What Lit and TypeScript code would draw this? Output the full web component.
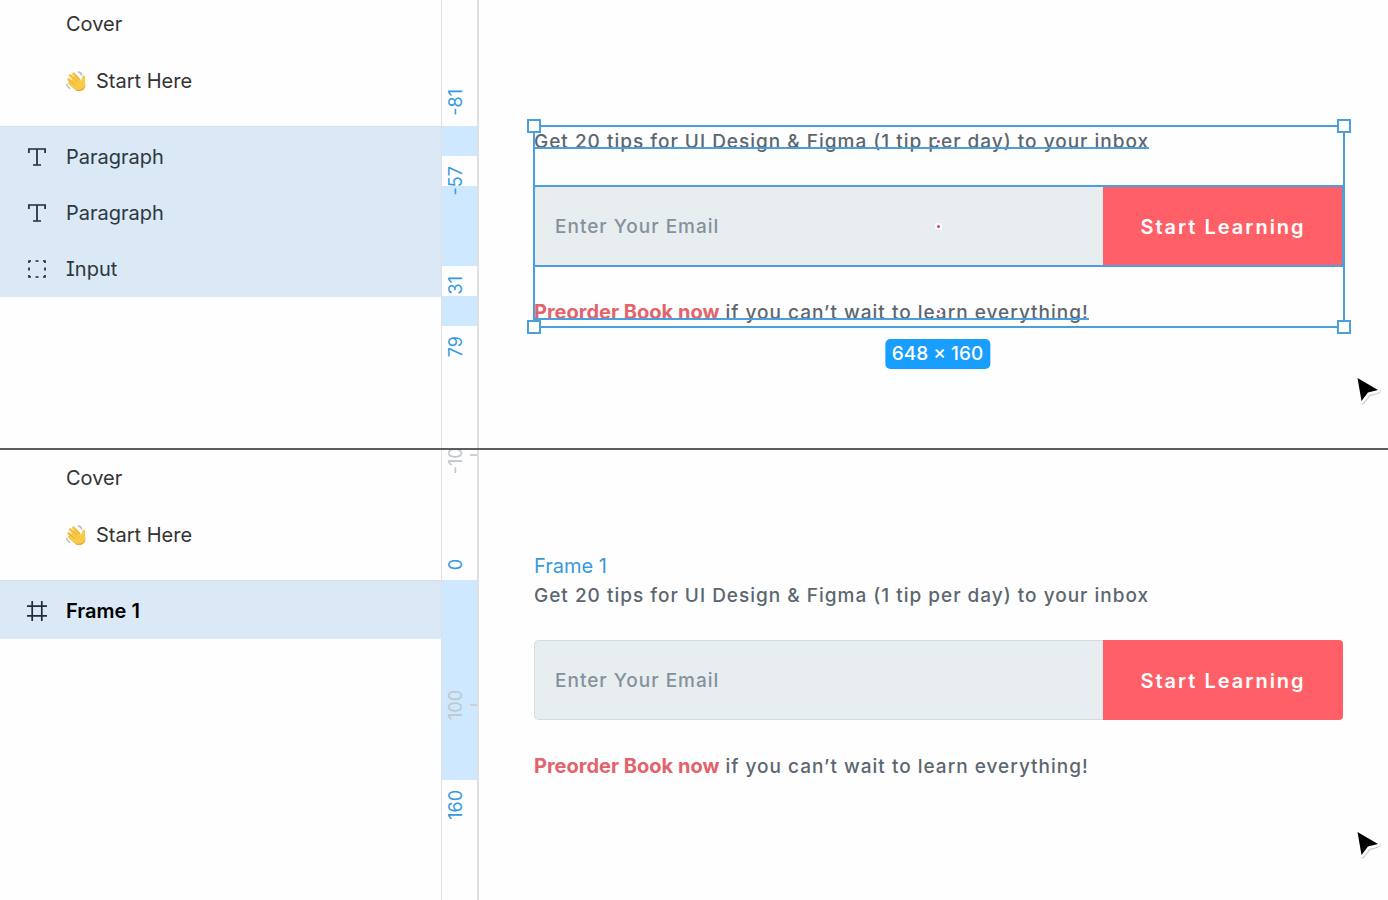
import { LitElement, html, svg, css, nothing } from "lit";
import { customElement, property } from "lit/decorators.js";
import { styleMap } from "lit/directives/style-map.js";

const SCALE = 1.25;

type IconName = "text" | "group" | "frame";
interface Layer { icon: IconName; name: string; strong?: boolean }
interface Band { from: number; to: number }
interface Mark { at: number; place: "before" | "after" | "center"; muted?: boolean }

const icons = {
  text: svg`<path d="M1.9 6V2H18.1V6M10 2V18M6 18H14" />`,
  group: svg`<path d="M2 4V2H4M8.5 2H11.5M16 2H18V4M18 8.5V11.5M18 16V18H16M11.5 18H8.5M4 18H2V16M2 11.5V8.5" />`,
  frame: svg`<path d="M5.2 0V20M14.8 0V20M0 5.2H20M0 14.8H20" />`,
};

@customElement("layer-list")
export class LayerList extends LitElement {
  @property({ attribute: false }) layers: Layer[] = [];

  static styles = css`
    :host { display: block; font-feature-settings: "cv08"; }
    .pages, .layers { display: grid; list-style: none; margin: 0; padding: 0; }
    .pages { gap: 1px; }
    .page, .layer { display: flex; align-items: center; height: 56px; color: #333; font-size: 20px; line-height: 24px; }
    .page { padding-left: 66px; gap: 9px; }
    .layers { margin-top: 17px; padding-top: 2px; border-top: 1px solid #d5e0e9; background: #dae9f5; }
    .layer { padding-left: 27px; gap: 19px; color: #2c3840; }
    .strong { font-weight: 600; color: #000; }
    .icon { width: 20px; height: 20px; fill: none; stroke: #222c34; stroke-width: 1.7; }
    .wave { width: 21px; height: 21px; }
  `;

  render() {
    return html`
      <ul class="pages">
        <li class="page">Cover</li>
        <li class="page">
          <svg class="wave" viewBox="0 0 21 21" aria-hidden="true">
            <g fill="none" stroke-linecap="round">
              <path d="M12.5 1.2Q15 1.5 15.6 4M0.8 13.5Q1 16.3 3.6 17.2" stroke="#bcc0c8" stroke-width="1.7" />
              <path d="M4.2 4.4L10.5 11M7.5 2.8L13 9M2.6 8.4L9 14M3.4 12L8.4 16.4" stroke="#f6c445" stroke-width="2.8" />
            </g>
            <path d="M6.4 6.4L11.4 4.8L15.2 9.8Q16 7.2 16.6 5.6Q17.6 3.9 19 5Q19.4 6 19 8Q19.2 11 19.4 14Q19.2 18.4 15 19.8Q11.5 20.8 8.8 18.4L4.4 13.2Z" fill="#f8ca4a" />
            <path d="M6 5.4L11 10.5M9.4 4.2L13.4 9M4 9.6L9 14" fill="none" stroke="#dc9d28" stroke-width="0.7" />
            <path d="M8.8 18.4Q11.5 20.8 15 19.8Q19.2 18.4 19.4 14Q17.4 18.4 13.4 18.8Q10.8 19 8.8 18.4Z" fill="#e5a52f" />
          </svg>
          <span>Start Here</span>
        </li>
      </ul>
      <ul class="layers">
        ${this.layers.map((l) => html`
          <li class="layer ${l.strong ? "strong" : ""}">
            <svg class="icon" viewBox="0 0 20 20" aria-hidden="true">${icons[l.icon]}</svg>
            <span>${l.name}</span>
          </li>`)}
      </ul>`;
  }
}

@customElement("side-ruler")
export class SideRuler extends LitElement {
  /** Distance in pixels from the top of the ruler to its zero. */
  @property({ type: Number }) origin = 0;
  @property({ attribute: false }) bands: Band[] = [];
  @property({ attribute: false }) marks: Mark[] = [];

  static styles = css`
    :host { display: block; position: relative; overflow: hidden; box-sizing: border-box; border: solid #e0e0e2; border-width: 0 2px 0 1px; }
    .band { position: absolute; left: 0; right: 0; background: #cde8ff; }
    .mark { position: absolute; left: 0; right: 0; height: 0; display: flex; }
    .after { align-items: flex-start; }
    .before { align-items: flex-end; }
    .center { align-items: center; }
    .label { flex: none; margin: 10px 4px; writing-mode: vertical-rl; transform: rotate(180deg); font-size: 18px; line-height: 20px; color: #3799e0; }
    .muted .label { color: #bfc6cc; }
    .muted::after { content: ""; width: 7px; height: 2px; margin-left: auto; background: #cbd0d4; }
  `;

  private y(v: number) { return Math.round(this.origin + v * SCALE); }

  render() {
    return html`
      ${this.bands.map((b) => html`<div class="band" style=${styleMap({ top: `${this.y(b.from)}px`, height: `${this.y(b.to) - this.y(b.from)}px` })}></div>`)}
      ${this.marks.map((m) => html`
        <div class="mark ${m.place} ${m.muted ? "muted" : ""}" style=${styleMap({ top: `${this.y(m.at)}px` })}>
          <span class="label">${m.at}</span>
        </div>`)}`;
  }
}

@customElement("signup-card")
export class SignupCard extends LitElement {
  @property({ type: Boolean }) selected = false;

  static styles = css`
    :host { display: block; position: relative; font-size: 19px; font-weight: 500; line-height: 32px; letter-spacing: 1px; color: #5b6770; }
    .stack { display: grid; gap: 30px; }
    .line, .form { position: relative; margin: 0; }
    .line { height: 30px; }
    .text { position: relative; }
    .lead { color: #e2636c; font-size: 20px; font-weight: 700; letter-spacing: 0; text-decoration: none; }
    .form { display: flex; height: 80px; }
    .field { flex: 1; min-width: 0; box-sizing: border-box; margin: 0; padding: 2px 20px 0; border: 1px solid #d3dce2; border-right: 0; border-radius: 5px 0 0 5px; background: #e8edf0; font: inherit; letter-spacing: 1px; color: #5b6770; outline: none; }
    .field::placeholder { color: #84919c; opacity: 1; }
    .submit { width: 240px; margin: 0; padding: 2px 0 0; border: 0; border-radius: 0 4px 4px 0; background: #ff6067; color: #fff; font: inherit; font-size: 20px; font-weight: 600; letter-spacing: 2px; }
    .selected .text::after { content: ""; position: absolute; left: 0; right: 0; bottom: 4px; height: 2px; background: #4a9fdc; }
    .selected .form { outline: 2px solid #4a9fdc; outline-offset: -1px; }
    .selected .line::after, .selected .form::after { content: ""; position: absolute; left: 50%; top: 50%; width: 3px; height: 3px; margin: -3px 0 0 -4px; border: 2px solid #fff; border-radius: 50%; background: #c2417c; }
    .bounds { position: absolute; inset: -1px -2px -2px -1px; border: 2px solid #4a9fdc; pointer-events: none; }
    .handle { position: absolute; width: 10px; height: 10px; border: 2px solid #4a9fdc; background: #fff; }
    .tl { left: -8px; top: -8px; }
    .tr { right: -8px; top: -8px; }
    .bl { left: -8px; bottom: -8px; }
    .br { right: -8px; bottom: -8px; }
    .size { position: absolute; top: 100%; left: 50%; transform: translateX(-50%); margin: 13px 0 0 -1px; padding: 0 7px; border-radius: 5px; background: #189eff; color: #fff; font-size: 19px; line-height: 30px; letter-spacing: 0; white-space: nowrap; }
  `;

  render() {
    return html`
      <div class="stack ${this.selected ? "selected" : ""}">
        <p class="line"><span class="text">Get 20 tips for UI Design &amp; Figma (1 tip per day) to your inbox</span></p>
        <form class="form" @submit=${(e: Event) => e.preventDefault()}>
          <input class="field" type="email" aria-label="Enter Your Email" placeholder="Enter Your Email" />
          <button class="submit" type="submit">Start Learning</button>
        </form>
        <p class="line"><span class="text"><a class="lead" href="#">Preorder Book now</a> if you can’t wait to learn everything!</span></p>
      </div>
      ${this.selected ? html`
        <div class="bounds">
          <i class="handle tl"></i><i class="handle tr"></i><i class="handle bl"></i><i class="handle br"></i>
        </div>
        <div class="size">648 × 160</div>` : nothing}`;
  }
}

@customElement("app-root")
export class AppRoot extends LitElement {
  static styles = css`
    :host { display: grid; grid-template-rows: 1fr 1fr; min-height: 100vh; background: #fefefe; font-family: Inter, "Liberation Sans", sans-serif; }
    .panel { position: relative; display: grid; grid-template-columns: 441px 38px minmax(0, 1fr); overflow: hidden; }
    .top { border-bottom: 2px solid #5f5d61; }
    .top .layers { margin-top: -4px; }
    .canvas { padding: 126px 45px 0 55px; }
    .bottom .canvas { padding-top: 100px; }
    .frame-name { height: 30px; color: #3799e0; font-size: 20px; line-height: 32px; }
    .cursor { position: absolute; right: 0; bottom: 34px; width: 40px; height: 42px; }
    .top .cursor { bottom: 36px; }
  `;

  private cursor() {
    return html`<svg class="cursor" viewBox="0 0 40 42" aria-hidden="true">
      <g stroke-linejoin="round">
        <path d="M10.500 9.500L30.500 21L20.800 24L14.500 32Z" fill="#888" stroke="#888" stroke-width="5" opacity="0.35" />
        <path d="M9.500 8L30 20L20 22.500L13.500 31Z" fill="#000" stroke="#fff" stroke-width="5" />
        <path d="M9.500 8L30 20L20 22.500L13.500 31Z" fill="#000" />
      </g>
    </svg>`;
  }

  render() {
    return html`
      <section class="panel top">
        <layer-list class="layers" .layers=${[
          { icon: "text", name: "Paragraph" },
          { icon: "text", name: "Paragraph" },
          { icon: "group", name: "Input" },
        ]}></layer-list>
        <side-ruler .origin=${227}
          .bands=${[{ from: -81, to: -57 }, { from: -33, to: 31 }, { from: 55, to: 79 }]}
          .marks=${[{ at: -81, place: "before" }, { at: -57, place: "after" }, { at: 31, place: "after" }, { at: 79, place: "after" }]}></side-ruler>
        <main class="canvas"><signup-card selected></signup-card></main>
        ${this.cursor()}
      </section>
      <section class="panel bottom">
        <layer-list class="layers" .layers=${[{ icon: "frame", name: "Frame 1", strong: true }]}></layer-list>
        <side-ruler .origin=${130}
          .bands=${[{ from: 0, to: 160 }]}
          .marks=${[{ at: -100, place: "center", muted: true }, { at: 0, place: "before" }, { at: 100, place: "center", muted: true }, { at: 160, place: "after" }]}></side-ruler>
        <div class="canvas">
          <div class="frame-name">Frame 1</div>
          <signup-card></signup-card>
        </div>
        ${this.cursor()}
      </section>`;
  }
}
